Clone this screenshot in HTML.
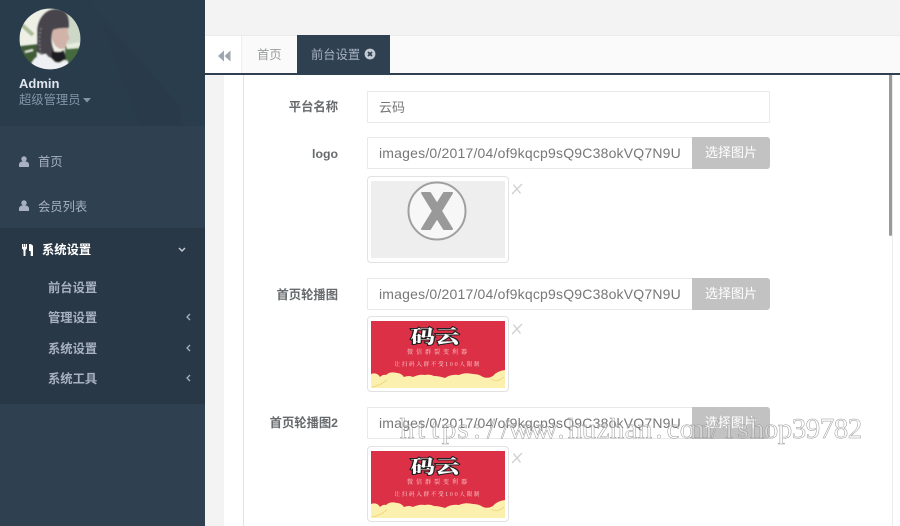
<!DOCTYPE html>
<html lang="zh"><head><meta charset="utf-8"><title>前台设置</title>
<style>
*{box-sizing:border-box}
html,body{margin:0;padding:0;width:900px;height:526px;overflow:hidden;background:#fff}
body{position:relative;font-family:"Liberation Sans","Noto Sans CJK SC",sans-serif;color:#676a6c}
.a{position:absolute}
.side{left:0;top:0;width:205px;height:526px;background:#2f4050}
.m{position:absolute;white-space:nowrap;font-size:12.3px;line-height:18px;color:#a7b1c2}
.sub{left:48px;font-weight:600;color:#a7b1c2}
.lab{position:absolute;right:562px;white-space:nowrap;font-size:12.3px;line-height:18px;font-weight:700;color:#676a6c}
.inp{position:absolute;left:367px;width:403px;height:32px;border:1px solid #e9e9ea;background:#fff;border-radius:1px;font-size:13px;line-height:31px;padding-left:11px;color:#777;white-space:nowrap;overflow:hidden}
.url{width:326px;font-size:14px;letter-spacing:.2px;font-family:"Liberation Sans",sans-serif;line-height:30px}
.btn{position:absolute;left:692px;width:78px;height:32px;background:#c2c2c2;color:#fff;font-size:13px;line-height:32px;text-align:center;border-radius:0 3px 3px 0}
.th{position:absolute;left:367px;width:142px;border:1px solid #e2e2e2;border-radius:4px;background:#fff}
.x{position:absolute;left:511px}
</style></head><body>
<div class="a" style="left:205px;top:0;width:695px;height:35px;background:#f3f3f4"></div>
<div class="a" style="left:205px;top:35px;width:695px;height:38px;background:#fafafa;border-top:1px solid #ececec"></div>
<div class="a" style="left:205px;top:36px;width:37px;height:37px;background:#fff;border-right:1px solid #eee"></div>
<svg class="a" style="left:218px;top:50px" width="13" height="12" viewBox="0 0 13 12"><path d="M6 .5v11L0 6zM12.500 .5v11L6.500 6z" fill="#9ea6b0"/></svg>
<div class="a" style="left:257px;top:46px;font-size:12.3px;line-height:18px;color:#999c9e">首页</div>
<div class="a" style="left:297px;top:35px;width:93px;height:38px;background:#2f4050"></div>
<div class="a" style="left:311px;top:46px;font-size:12.3px;line-height:18px;color:#a7b1c2;white-space:nowrap">前台设置</div>
<svg class="a" style="left:364px;top:48px" width="12" height="12" viewBox="0 0 12 12"><circle cx="6" cy="6" r="5.400" fill="#c3cad3"/><path d="M4 4l4 4M8 4l-4 4" stroke="#2f4050" stroke-width="1.600"/></svg>
<div class="a" style="left:205px;top:73px;width:695px;height:2px;background:#2f4050"></div>

<div class="a" style="left:205px;top:75px;width:19px;height:451px;background:#f3f3f4"></div>
<div class="a" style="left:243px;top:75px;width:1px;height:451px;background:#e2e2e2"></div>
<div class="a" style="left:892px;top:75px;width:1px;height:451px;background:#ececec"></div>
<div class="a" style="left:889px;top:75px;width:3px;height:161px;background:#999;border-radius:0 0 2px 2px"></div>

<div class="lab" style="top:98px">平台名称</div>
<div class="inp" style="top:91px">云码</div>

<div class="lab" style="top:145px">logo</div>
<div class="inp url" style="top:137px">images/0/2017/04/of9kqcp9sQ9C38okVQ7N9U</div>
<div class="btn" style="top:137px">选择图片</div>
<div class="th" style="top:176px;height:87px">
<svg style="position:absolute;left:3px;top:4px" width="134" height="77" viewBox="0 0 134 77"><rect width="134" height="77" fill="#eee"/><circle cx="66" cy="30" r="28.500" fill="#f7f7f7" stroke="#a0a0a0" stroke-width="2"/><path d="M51 12h8l7 11 7-11h8L70 30l11 18h-8l-7-11-7 11h-8l11-18z" fill="#999" stroke="#999" stroke-width="2" stroke-linejoin="round"/></svg>
</div>
<svg class="x" style="top:183px" width="12" height="12" viewBox="0 0 12 12"><path d="M1 11L11 1M2.500 1.500l7 9" stroke="#cfcfcf" stroke-width="1.300"/></svg>

<div class="lab" style="top:286px">首页轮播图</div>
<div class="inp url" style="top:278px">images/0/2017/04/of9kqcp9sQ9C38okVQ7N9U</div>
<div class="btn" style="top:278px">选择图片</div>
<div class="th" style="top:316px;height:76px">
<svg style="position:absolute;left:3px;top:4px" width="134" height="67" viewBox="0 0 134 67"><rect width="134" height="67" fill="#dc3046"/><path d="M0 53Q6 51 9 56Q12 53 15 54Q19 50 26 52Q30 52 33 56Q38 54 42 56Q48 53 54 54Q59 53 63 55Q68 55 74 57Q80 53 88 54Q94 51 102 53Q108 53 112 56Q117 58 122 55Q126 50 134 49V67H0z" fill="#fcf0ae"/><path d="M1 66Q8 65 16 59M120 58Q126 62 133 56" stroke="#efd97f" fill="none"/><text x="64" y="22" text-anchor="middle" font-size="18" font-weight="900" fill="#fff" stroke="#222" stroke-width="2" paint-order="stroke" textLength="49" lengthAdjust="spacingAndGlyphs" font-family="'Noto Serif CJK SC','Noto Sans CJK SC',sans-serif">码云</text><text x="66" y="33" text-anchor="middle" font-size="6" fill="#f9c9cb" textLength="60" font-family="'Noto Serif CJK SC',sans-serif">微信群裂变利器</text><text x="66" y="45" text-anchor="middle" font-size="5.500" fill="#fbd9d9" textLength="85" font-family="'Noto Serif CJK SC',sans-serif">让扫码入群不受100人限制</text></svg>
</div>
<svg class="x" style="top:323px" width="12" height="12" viewBox="0 0 12 12"><path d="M1 11L11 1M2.500 1.500l7 9" stroke="#cfcfcf" stroke-width="1.300"/></svg>

<div class="lab" style="top:414px">首页轮播图2</div>
<div class="inp url" style="top:407px">images/0/2017/04/of9kqcp9sQ9C38okVQ7N9U</div>
<div class="btn" style="top:407px">选择图片</div>
<div class="th" style="top:446px;height:76px">
<svg style="position:absolute;left:3px;top:4px" width="134" height="67" viewBox="0 0 134 67"><rect width="134" height="67" fill="#dc3046"/><path d="M0 53Q6 51 9 56Q12 53 15 54Q19 50 26 52Q30 52 33 56Q38 54 42 56Q48 53 54 54Q59 53 63 55Q68 55 74 57Q80 53 88 54Q94 51 102 53Q108 53 112 56Q117 58 122 55Q126 50 134 49V67H0z" fill="#fcf0ae"/><path d="M1 66Q8 65 16 59M120 58Q126 62 133 56" stroke="#efd97f" fill="none"/><text x="64" y="22" text-anchor="middle" font-size="18" font-weight="900" fill="#fff" stroke="#222" stroke-width="2" paint-order="stroke" textLength="49" lengthAdjust="spacingAndGlyphs" font-family="'Noto Serif CJK SC','Noto Sans CJK SC',sans-serif">码云</text><text x="66" y="33" text-anchor="middle" font-size="6" fill="#f9c9cb" textLength="60" font-family="'Noto Serif CJK SC',sans-serif">微信群裂变利器</text><text x="66" y="45" text-anchor="middle" font-size="5.500" fill="#fbd9d9" textLength="85" font-family="'Noto Serif CJK SC',sans-serif">让扫码入群不受100人限制</text></svg>
</div>
<svg class="x" style="top:452px" width="12" height="12" viewBox="0 0 12 12"><path d="M1 11L11 1M2.500 1.500l7 9" stroke="#cfcfcf" stroke-width="1.300"/></svg>

<div class="a side">
<svg class="a" style="left:0;top:0" width="205" height="126" viewBox="0 0 205 126"><rect width="205" height="126" fill="#2a3d4d"/><path d="M0 0H90L181 108V126H0z" fill="#293c4c"/><path d="M100 18L181 107V126H140z" fill="#293b4b"/></svg>
<svg class="a" style="left:19px;top:8px" width="62" height="62" viewBox="0 0 62 62">
<defs><clipPath id="c"><circle cx="31" cy="31" r="30.500"/></clipPath><filter id="b"><feGaussianBlur stdDeviation=".8"/></filter></defs>
<g clip-path="url(#c)"><g filter="url(#b)">
<rect width="62" height="62" fill="#eef0e6"/>
<rect x="46" y="0" width="16" height="36" fill="#cdd8c8"/>
<path d="M2 16L14 27" stroke="#a9bb96" stroke-width="4"/>
<path d="M0 38L18 36V62H0z" fill="#3f5c35"/>
<path d="M6 44L14 42" stroke="#dfe6d8" stroke-width="2"/>
<path d="M46 38H62V62H46z" fill="#456a3c"/>
<path d="M47 37L60 34V40L48 41z" fill="#e6ece0"/>
<path d="M34 18C40 16 46 17 49 20L49 26L51 31L48 33C48 38 46 41 43 41C38 41 34 36 33 30z" fill="#d1b3a9"/>
<path d="M18 22C19 8 29 0 38 1C47 1 51 8 50 20C44 20 38 20 34 22C32 28 32 36 35 42L33 50L24 48L18 44z" fill="#47444b"/>
<path d="M33 42C37 45 42 44 45 42L47 51L38 56L32 50z" fill="#1f1e22"/>
<path d="M10 62C13 50 20 46 27 46L34 54L42 55L48 52L52 62z" fill="#eef0f4"/>
<path d="M22 20C20 28 20 38 22 46" stroke="#75727a" stroke-width="2" stroke-dasharray="2 2" fill="none"/>
</g></g></svg>
<div class="a" style="left:19px;top:75px;font-size:13px;line-height:17px;font-weight:700;color:#dfe4ed">Admin</div>
<div class="a" style="left:19px;top:91px;font-size:12.3px;line-height:18px;color:#8095a8;white-space:nowrap">超级管理员</div>
<svg class="a" style="left:83px;top:98px" width="8" height="5" viewBox="0 0 8 5"><path d="M0 0h8L4 4.500z" fill="#8095a8"/></svg>

<svg class="a" style="left:19px;top:156px" width="10" height="11" viewBox="0 0 10 11"><circle cx="5" cy="3" r="2.700" fill="#a7b1c2"/><path d="M0 11V8.500C0 6.500 2 5.700 3 5.500h4c1 .2 3 1 3 3V11z" fill="#a7b1c2"/></svg>
<div class="m" style="left:38px;top:153px">首页</div>
<svg class="a" style="left:19px;top:200px" width="10" height="11" viewBox="0 0 10 11"><circle cx="5" cy="3" r="2.700" fill="#a7b1c2"/><path d="M0 11V8.500C0 6.500 2 5.700 3 5.500h4c1 .2 3 1 3 3V11z" fill="#a7b1c2"/></svg>
<div class="m" style="left:38px;top:198px">会员列表</div>

<div class="a" style="left:0;top:228px;width:205px;height:176px;background:#293846"></div>
<svg class="a" style="left:22px;top:244px" width="12" height="12" viewBox="0 0 12 12"><path d="M0 0h1.200v3h.6V0h1.200v3h.6V0H5v4.500L3.600 6l-.2 6H1.600L1.400 6 0 4.500zM7 0c2.500 0 4 1 4 2.500V12H8.700V7H7z" fill="#fff"/></svg>
<div class="m" style="left:42px;top:241px;color:#fff;font-weight:700">系统设置</div>
<svg class="a" style="left:178px;top:247px" width="8" height="6" viewBox="0 0 8 6"><path d="M1 1l3 3 3-3" stroke="#c3cad3" stroke-width="1.500" fill="none"/></svg>
<div class="m sub" style="top:279px">前台设置</div>
<div class="m sub" style="top:309px">管理设置</div>
<div class="m sub" style="top:340px">系统设置</div>
<div class="m sub" style="top:370px">系统工具</div>
<svg class="a" style="left:186px;top:313px" width="5" height="8" viewBox="0 0 5 8"><path d="M4 1L1 4l3 3" stroke="#a7b1c2" stroke-width="1.300" fill="none"/></svg>
<svg class="a" style="left:186px;top:344px" width="5" height="8" viewBox="0 0 5 8"><path d="M4 1L1 4l3 3" stroke="#a7b1c2" stroke-width="1.300" fill="none"/></svg>
<svg class="a" style="left:186px;top:374px" width="5" height="8" viewBox="0 0 5 8"><path d="M4 1L1 4l3 3" stroke="#a7b1c2" stroke-width="1.300" fill="none"/></svg>
</div>

<svg class="a" style="left:395px;top:405px" width="480" height="45" viewBox="0 0 480 45"><text y="33" text-anchor="middle" x="12 26 40 54 68 82 96 110 124 138 152 166 180 194 208 222 236 250 264 278 292 306 320 334 348 362 376 390 404 418 432 446 460" font-family="'Liberation Serif',serif" font-size="29" fill="rgba(255,255,255,.35)" stroke="#999" stroke-width=".5">https://www.huzhan.com/ishop39782</text></svg>
</body></html>
